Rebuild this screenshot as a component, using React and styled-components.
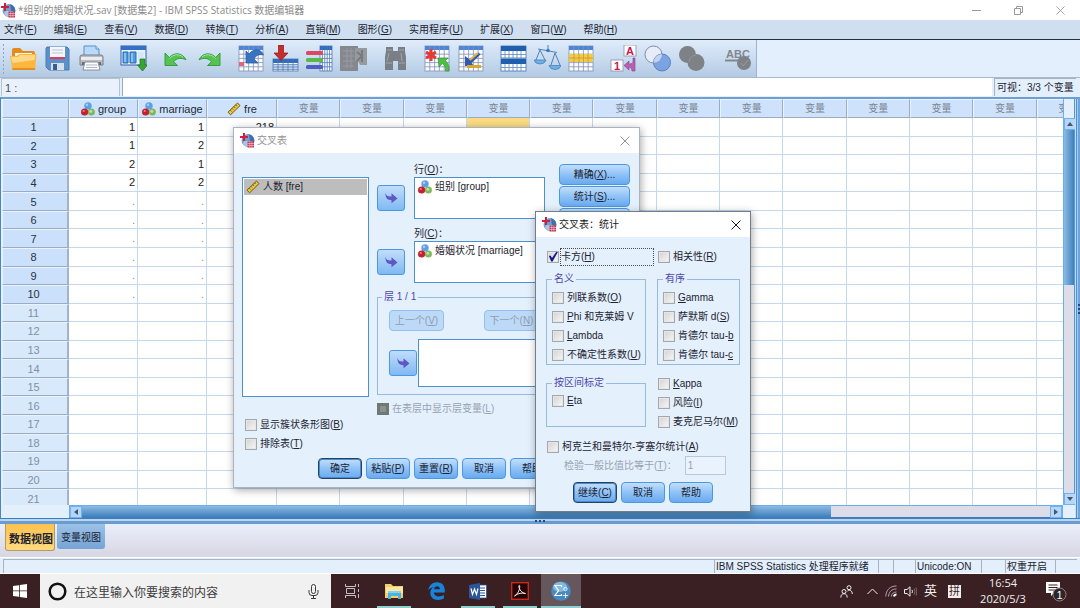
import React from 'react';
import styled, { createGlobalStyle, css } from 'styled-components';

const GlobalStyle = createGlobalStyle`
    * {
        box-sizing: border-box;
    }
    body {
        margin: 0;
        overflow: hidden;
        font-family: "Liberation Sans", "Noto Sans CJK SC", sans-serif;
        font-size: 10px;
        line-height: 12px;
        color: #1c2430;
    }
    button,
    input {
        font: inherit;
        color: inherit;
        margin: 0;
        padding: 0;
    }
    button {
        border: 0;
        background: none;
        white-space: nowrap;
    }
    svg {
        display: block;
        flex: none;
    }
`;

/* ---------- window ---------- */

const Desktop = styled.div`
    position: relative;
    display: flex;
    flex-direction: column;
    height: 100vh;
    background: #e4effc;
`;

const TitleBar = styled.header`
    display: flex;
    align-items: center;
    height: 20px;
    padding: 0 12px 0 1px;
    gap: 2px;
    background: #fff;
    color: #8b8b8b;
    font-family: "Open Sans", "Noto Sans CJK SC", sans-serif;
    white-space: nowrap;
`;

const WindowTitle = styled.h1`
    flex: 1;
    margin: 0;
    font-size: 10px;
    font-weight: 400;
`;

const WindowButton = styled.button`
    display: flex;
    align-items: center;
    justify-content: center;
    width: 40px;
    height: 20px;
    color: #9a9a9a;
    &:last-child {
        margin-right: -12px;
    }
`;

const MenuBar = styled.nav`
    display: flex;
    align-items: center;
    gap: 17px;
    height: 20px;
    padding: 0 4px;
    background: #cfdff0;
    border-bottom: 1px solid #27313c;
`;

const ToolbarRow = styled.div`
    display: flex;
    height: 38px;
    border-bottom: 1px solid #a9b9cd;
    background: #e4effe;
`;

const Toolbar = styled.div`
    display: flex;
    align-items: center;
    gap: 8px;
    padding: 0 1px 0 2px;
    background: linear-gradient(#e0ecfa, #c9dcf0 50%, #b3cae3);
    border-right: 1px solid #9fb3ca;
`;

const Grip = styled.span`
    width: 3px;
    height: 32px;
    margin-right: -7px;
    background: radial-gradient(circle, #8ea4bf 1px, transparent 1px) 0 0 / 3px 4px;
`;

const ToolGroup = styled.div`
    display: flex;
    &:last-child {
        padding-left: 5px;
    }
`;

const ToolButton = styled.button`
    display: flex;
    justify-content: center;
    width: 34px;
`;

const CellBar = styled.div`
    display: flex;
    gap: 2px;
    height: 19px;
    padding: 0 4px 1px 1px;
`;

const CellName = styled.div`
    width: 119px;
    padding: 3px 4px 0 3px;
    font-size: 11px;
    color: #4a5260;
    background: #e8f1fc;
    border: 1px solid #b4c2d4;
    border-bottom: 0;
`;

const CellEditor = styled.input`
    flex: 1;
    min-width: 0;
    background: #fff;
    border: 0;
    border-left: 1px solid #9aa9bb;
    border-radius: 0;
    outline: 0;
`;

const VisibleCount = styled.div`
    padding: 3px 0 0 2px;
    width: 82px;
    border-top: 1px solid #a6b3c4;
    border-left: 1px solid #a6b3c4;
    white-space: nowrap;
`;

/* ---------- data grid ---------- */

const Workspace = styled.main`
    flex: 1;
    min-height: 0;
    display: grid;
    grid-template-columns: 1fr 12px 5px;
    grid-template-rows: 1fr 13px;
    padding-left: 1px;
    border-top: 2px solid #6d9fd2;
    border-left: 1px solid #4c86c0;
    background: #e4effc;
`;

const GridView = styled.div`
    overflow: hidden;
    background: #fff;
`;

const DataTable = styled.table`
    table-layout: fixed;
    width: calc(100% + 37px);
    height: calc(100% + 3px);
    border-collapse: separate;
    border-spacing: 0;
    font-size: 11px;
`;

const headCell = css`
    padding: 0;
    font-weight: 400;
    text-align: center;
    border: 1px solid #9cabc4;
    border-top-color: #eaf3ff;
    border-left-color: #eaf3ff;
    background: #cfe2fb;
`;

const ColumnHead = styled.th`
    ${headCell}
    height: 19px;
    width: ${(props) => props.$width || 'auto'};
    color: ${(props) => (props.$empty ? '#7b8594' : '#222a36')};
    font-size: ${(props) => (props.$empty ? '10px' : '11px')};
`;

const HeadInner = styled.span`
    display: flex;
    align-items: center;
    justify-content: center;
    gap: 3px;
`;

const RowHead = styled.th`
    ${headCell}
    border-right: 2px solid #9fb3cf;
    padding-right: 3px;
    color: ${(props) => (props.$used ? '#2a3240' : '#8290a4')};
    background: ${(props) => (props.$used ? '#cbe0fb' : '#d9e9fc')};
`;

const Cell = styled.td`
    padding: 0 2px 0 0;
    text-align: right;
    border-right: 1px solid #c4d9ee;
    border-bottom: 1px solid #c4d9ee;
    background: ${(props) => (props.$active ? '#fbdc83' : '#fff')};
    color: ${(props) => (props.$missing ? '#8590a0' : '#222')};
`;

const VerticalScroll = styled.div`
    display: flex;
    flex-direction: column;
    padding-top: 19px;
    background: #e4effc;
    border-right: 1px solid #4f97dc;
    border-left: 1px solid #6aaef0;
`;

const HorizontalScroll = styled.div`
    display: flex;
    margin-left: 67px;
    border: 1px solid #6aaef0;
    border-bottom-color: #3f7db8;
`;

const ScrollButton = styled.button`
    display: flex;
    flex: none;
    align-items: center;
    justify-content: center;
    width: 12px;
    height: 12px;
    color: #44566e;
    background: #b5d6f8;
    border: 1px solid #6fb2f2;
`;

const Thumb = styled.div`
    flex: ${(props) => props.$size};
    background: linear-gradient(
        ${(props) => (props.$vertical ? '90deg' : '180deg')},
        #8cbbe4,
        #3f80bd
    );
`;

const Track = styled.div`
    flex: ${(props) => props.$size};
    background: #dcdde8;
`;

const Splitter = styled.div`
    display: flex;
    align-items: center;
    justify-content: center;
    gap: 2px;
    height: 6px;
    background: linear-gradient(#3e80bd 1px, #b7d6f5 1px 3px, #6c9cce 3px);
`;

const SideSplitter = styled(Splitter)`
    grid-column: 3;
    grid-row: 1 / 3;
    flex-direction: column;
    height: auto;
    padding-left: 2px;
    background: linear-gradient(90deg, #c7dff7 1px, #4f90d0 1px 2px, #a5cbef 2px 3px, #6fa5db 3px);
`;

const Dot = styled.i`
    width: 2px;
    height: 2px;
    background: #274b78;
`;

const TabStrip = styled.div`
    display: flex;
    align-items: flex-start;
    gap: 2px;
    height: 33px;
    padding: 0 5px;
    background: linear-gradient(#e9effa, #d7d6e3);
`;

const ViewTab = styled.button`
    padding: 0 3px;
    border-radius: 0 0 3px 3px;
    ${(props) =>
        props.$active
            ? css`
                  height: 27px;
                  width: 50px;
                  font-size: 11px;
                  font-weight: 700;
                  padding-top: 3px;
                  background: linear-gradient(#fbc24f, #fedb7e);
                  border: 1px solid #b79a63;
                  border-top: 0;
              `
            : css`
                  height: 25px;
                  width: 48px;
                  padding-top: 2px;
                  background: linear-gradient(#9cc1e6, #74a4d6);
              `}
`;

const StatusBar = styled.footer`
    display: flex;
    height: 17px;
    padding: 1px 3px 0 3px;
    background: #e3effb;
    border-top: 1px solid #fff;
    border-bottom: 1px solid #fff;
`;

const StatusField = styled.div`
    flex: ${(props) => (props.$width ? 'none' : 1)};
    width: ${(props) => props.$width || 'auto'};
    padding: 1px 0 0 1px;
    border-top: 1px solid #a8b3c2;
    border-left: 1px solid #a8b3c2;
    white-space: nowrap;
`;

/* ---------- dialogs ---------- */

const DialogWindow = styled.section`
    position: absolute;
    left: ${(props) => props.$left};
    top: ${(props) => props.$top};
    width: ${(props) => props.$width};
    background: #e5f0fd;
    border: 1px solid ${(props) => (props.$front ? '#6f7d8d' : '#aab4c0')};
    box-shadow: 1px 2px 8px rgba(0, 0, 0, 0.35);
`;

const DialogTitle = styled.header`
    display: flex;
    align-items: center;
    gap: 2px;
    height: 25px;
    padding: 0 9px 0 6px;
    background: #fff;
    color: ${(props) => (props.$front ? '#1a1a1a' : '#949494')};
    h2 {
        flex: 1;
        margin: 0;
        font-size: 10px;
        font-weight: 400;
    }
`;

const CrosstabBody = styled.div`
    display: flex;
    flex-direction: column;
    gap: 5px;
    padding: 11px 9px 8px 8px;
`;

const Columns = styled.div`
    display: flex;
`;

const SourceColumn = styled.div`
    width: 127px;
    margin-right: 8px;
    padding-top: 13px;
`;

const VariableList = styled.div`
    height: ${(props) => props.$height};
    flex: 1;
    min-width: 0;
    padding: 1px;
    background: #fff;
    border: 1px solid #4d8fd0;
`;

const Variable = styled.div`
    display: flex;
    align-items: center;
    gap: 3px;
    height: 16px;
    padding-left: 2px;
    white-space: nowrap;
    background: ${(props) => (props.$selected ? '#bdbdbd' : 'none')};
`;

const SourceChecks = styled.div`
    padding: 18px 0 0 3px;
`;

const TargetColumn = styled.div`
    flex: 1;
    min-width: 0;
`;

const TargetLabel = styled.div`
    height: 13px;
    padding-left: 37px;
`;

const TargetRow = styled.div`
    display: flex;
    align-items: center;
    gap: ${(props) => props.$gap || '9px'};
    margin-bottom: ${(props) => props.$after || '0'};
`;

const ArrowButton = styled.button`
    display: flex;
    flex: none;
    align-items: center;
    justify-content: center;
    width: 28px;
    height: 26px;
    border: 1px solid #4a98e2;
    border-radius: 3px;
    background: linear-gradient(#c0ddfb, #7fb9f3);
`;

const PushButton = styled.button`
    width: ${(props) => props.$width || '44px'};
    height: 21px;
    border: 1px solid ${(props) => (props.$primary ? '#27415f' : '#4a98e2')};
    border-radius: 4px;
    background: linear-gradient(#c2defb, #8fc2f7 50%, #69aaf0);
    ${(props) => props.$primary && 'box-shadow: inset 0 0 0 1px #4a8cd0;'}
    &:disabled {
        color: #8f9daf;
        border-color: #8fc0ee;
        background: #bcdaf8;
    }
`;

const ButtonRow = styled.div`
    display: flex;
    justify-content: ${(props) => (props.$spread ? 'space-between' : 'center')};
    gap: 4px;
    padding: ${(props) => props.$padding || '0'};
`;

const SideButtons = styled.div`
    display: flex;
    flex-direction: column;
    gap: 1px;
    margin-left: 14px;
`;

const Group = styled.fieldset`
    margin: ${(props) => props.$margin || '0'};
    min-width: 0;
    padding: ${(props) => props.$padding || '3px 0 0 5px'};
    border: 1px solid #96b9df;
    height: ${(props) => props.$height || 'auto'};
    legend {
        margin-left: ${(props) => props.$indent || '0'};
        padding: 0 2px;
        color: #4b48a8;
    }
`;

const CheckLabel = styled.label`
    display: flex;
    align-items: center;
    gap: 3px;
    height: 19px;
    white-space: nowrap;
    color: ${(props) => (props.$disabled ? '#97a3b2' : 'inherit')};
    input {
        position: relative;
        flex: none;
        appearance: none;
        width: 12px;
        height: 12px;
        border: 1px solid #a4a8ad;
        background: linear-gradient(135deg, #d2d2d2, #f8f8f8);
        box-shadow: inset 0 0 0 1px #e6e6e6;
    }
    input:disabled {
        background: #8a918e;
        border-color: #6f7875;
        box-shadow: inset 0 0 0 2px #6f7875;
    }
    input:checked::after {
        content: '';
        position: absolute;
        inset: 0;
        background: #16168a;
        clip-path: polygon(8% 42%, 28% 42%, 40% 64%, 84% 2%, 100% 2%, 46% 100%, 32% 100%);
    }
`;

const Focusable = styled.span`
    ${(props) =>
        props.$focused &&
        css`
            flex: 1;
            margin-left: -2px;
            padding: 2px 0;
            height: 18px;
            border: 1px dotted #4a4a4a;
        `}
`;

const StatsBody = styled.div`
    padding: 10px 10px 8px;
`;

const StatsGrid = styled.div`
    display: grid;
    grid-template-columns: 100px 1fr;
    column-gap: 11px;
    padding: ${(props) => props.$padding || '0'};
`;

const WideCheck = styled.div`
    width: 108px;
    padding-left: 1px;
`;

const Inset = styled.div`
    padding: ${(props) => props.$padding || '0 0 0 1px'};
`;

const RatioRow = styled.label`
    display: flex;
    align-items: center;
    gap: 8px;
    height: 19px;
    margin-bottom: 7px;
    padding-left: 18px;
    color: #97a3b2;
    white-space: nowrap;
    input {
        width: 41px;
        height: 19px;
        padding-left: 2px;
        background: #e9f2fd;
        border: 1px solid #b9c9db;
        border-radius: 0;
    }
`;

/* ---------- taskbar ---------- */

const Taskbar = styled.div`
    display: flex;
    height: 34px;
    background: #3a2023;
    color: #f2eeee;
`;

const TaskButton = styled.button`
    display: flex;
    align-items: center;
    justify-content: center;
    width: ${(props) => props.$width || '42px'};
    background: ${(props) => (props.$active ? '#65575b' : 'none')};
`;

const RunMark = styled.span`
    display: flex;
    align-items: center;
    justify-content: center;
    align-self: stretch;
    width: ${(props) => (props.$full ? '100%' : '34px')};
    border-top: 2px solid transparent;
    border-bottom: 2px solid ${(props) => (props.$on ? '#8fd0cf' : 'transparent')};
`;

const SearchBox = styled.label`
    display: flex;
    align-items: center;
    gap: 7px;
    width: 291px;
    padding: 0 12px 0 8px;
    background: #f1f1f1;
    color: #333;
    input {
        flex: 1;
        min-width: 0;
        border: 0;
        outline: 0;
        background: none;
        font-size: 12px;
        font-family: "Noto Sans CJK SC", sans-serif;
    }
    input::placeholder {
        color: #3c3c3c;
        opacity: 1;
    }
`;

const Tray = styled.div`
    display: flex;
    align-items: center;
    gap: 7px;
    margin-left: auto;
    padding-right: 13px;
    font-size: 13px;
`;

const Clock = styled.time`
    width: 56px;
    margin: 0 8px 0 0;
    font: 11px/16px "Open Sans", sans-serif;
    text-align: center;
`;

const ImeMode = styled.span`
    width: 13px;
    height: 13px;
    margin-left: 4px;
    background: #f2eeee;
    color: #3a2023;
    font-size: 11px;
    line-height: 13px;
    text-align: center;
`;

/* ---------- icons ---------- */

const SpssIcon = () => (
    <svg width="15" height="15" viewBox="0 0 15 15">
        <circle cx="8" cy="7.5" r="6.4" fill="#6f9ed0" />
        <path d="M3 11a6.4 6.4 0 0 0 8 2.2V8H4z" fill="#a9c6e6" />
        <path d="M9 1.3a6.4 6.4 0 0 1 5 8L10 8z" fill="#3f6fae" />
        <path d="M4 0v8M0 4h8" stroke="#d01f3c" strokeWidth="2" />
        <rect x="7.5" y="8.5" width="6.5" height="6" fill="#c93450" />
        <path d="M7.5 10.5H14M7.5 12.5H14M9.7 8.5v6M11.9 8.5v6" stroke="#f0c9d2" strokeWidth=".6" />
    </svg>
);

const NominalIcon = () => (
    <svg width="14" height="14" viewBox="0 0 14 14">
        <circle cx="7" cy="3.9" r="3.7" fill="#5f9fe6" />
        <circle cx="6" cy="2.8" r="1.2" fill="#a9cdf5" />
        <circle cx="3.6" cy="10" r="3.6" fill="#c4202f" />
        <circle cx="2.7" cy="9" r="1.1" fill="#e9848c" />
        <circle cx="10.4" cy="10" r="3.5" fill="#7fb75c" />
        <circle cx="9.8" cy="9.3" r="1.5" fill="#bfe0a4" />
    </svg>
);

const ScaleIcon = () => (
    <svg width="14" height="14" viewBox="0 0 14 14">
        <path d="M10.5 1 13 3.6 3.6 12.8 1 10.2z" fill="#ecc93c" stroke="#6d5612" strokeWidth="1" />
        <path d="m8.6 2.9 1.2 1.2M6.8 4.6l1.4 1.4M5 6.4l1.2 1.2M3.2 8.1l1.4 1.4" stroke="#5b4a15" strokeWidth=".8" />
    </svg>
);

const TransferIcon = () => (
    <svg width="13" height="12" viewBox="0 0 13 12">
        <path d="M.5.8C1 4 3 4.600 6.500 4.400V1.300L12.500 6.400 6.500 11.300V8.200C2.500 8.200.2 6 .5.8z" fill="#6255c4" />
    </svg>
);

const CloseIcon = ({ size = 10 }) => (
    <svg width={size} height={size} viewBox="0 0 10 10" fill="none" stroke="currentColor" strokeWidth="1">
        <path d="m.5.5 9 9M9.500.5l-9 9" />
    </svg>
);

const MinimizeIcon = () => (
    <svg width="9" height="9" viewBox="0 0 9 9" stroke="currentColor">
        <path d="M0 4.500h9" />
    </svg>
);

const RestoreIcon = () => (
    <svg width="9" height="9" viewBox="0 0 9 9" fill="none" stroke="currentColor">
        <path d="M.5 2.500h6v6h-6zM2.500 2.500v-2h6v6h-2" />
    </svg>
);

const Art = ({ children }) => (
    <svg width="27" height="27" viewBox="0 0 27 27">
        {children}
    </svg>
);

// small spreadsheet that several tools draw on top of
const Sheet = ({ x = 1, y = 1, w = 24, h = 25, head = '#4d86d8', line = '#8391b5' }) => (
    <g>
        <rect x={x} y={y} width={w} height={h} fill="#fbfcff" stroke={line} strokeWidth=".8" />
        <rect x={x} y={y} width={w} height="4" fill={head} />
        {[1, 2, 3, 4].map((i) => (
            <path
                key={i}
                d={`M${x + (w * i) / 5} ${y}v${h}M${x} ${y + 4 + ((h - 4) * i) / 5}h${w}`}
                stroke={line}
                strokeWidth=".8"
            />
        ))}
    </g>
);

const FolderIcon = () => (
    <Art>
        <path d="M2 5q0-2 2-2h6l3 3h10q2 0 2 2v6H2z" fill="#e58b1d" />
        <path d="M5 8h17v5H5z" fill="#fff5da" />
        <path d="M0 11h7l2-2h17.500l-1.500 16H2.500z" fill="#fbb740" />
        <path d="M1 12h7l2-2h15l-.5 5-22 3z" fill="#ffd987" />
        <path d="M2.300 23h23l-.3 2H2.500z" fill="#e98d1c" />
    </Art>
);

const SaveIcon = () => (
    <Art>
        <path d="M3 2h20l2 2v21H5l-3-3V3z" fill="#5b90c8" stroke="#4a7cb4" />
        <rect x="6" y="2" width="15" height="12" fill="#f4f6fa" />
        <path d="M6 12h15v2H6z" fill="#dc3d5a" />
        <path d="M8 5h11M8 8h11" stroke="#bcc6d6" />
        <path d="M7 18h13v7H7z" fill="#d7dfea" />
        <rect x="9" y="19" width="4" height="6" fill="#355f92" />
    </Art>
);

const PrintIcon = () => (
    <Art>
        <path d="M6 1h12l3 3v8H6z" fill="#b9d9f8" stroke="#5a8fc8" />
        <path d="M18 1v3h3" fill="#e9f4ff" stroke="#5a8fc8" />
        <path d="M2 12q0-2 2-2h19q2 0 2 2v8H2z" fill="#b9bcc4" stroke="#7b7f88" />
        <path d="M3 12h21v3H3z" fill="#ececf0" />
        <path d="M4 17h19v3H4z" fill="#6a6e77" />
        <path d="M7 17h13l2 8H5z" fill="#fff" stroke="#85909e" />
        <path d="M8 20h11M8 22.500h11" stroke="#aab4c2" />
    </Art>
);

const RecallIcon = () => (
    <Art>
        <rect x="1" y="1" width="25" height="19" fill="#e9f3fe" stroke="#315fa8" />
        <rect x="1" y="1" width="25" height="4" fill="#3471c5" />
        <path d="M3 7h5v11H3zM10 7h6v11h-6z" fill="#4d9be2" stroke="#2a69b0" />
        <path d="M5 8v9M12 8v9" stroke="#c9e4fb" />
        <path d="M18 7h6v9h-6z" fill="#d5e7f9" />
        <path d="M20 14h5v6h2.500L22.500 26 17.500 20H20z" fill="#35a535" stroke="#217421" strokeWidth=".7" />
    </Art>
);

const UndoIcon = ({ flip }) => (
    <Art>
        <g transform={flip ? 'translate(27 0) scale(-1 1)' : undefined}>
            <path
                d="M3 8v12.500h12.500l-4-3.700c3-4 8-4.200 12.500-2C20.500 7.500 12 7 7.300 12.500z"
                fill="#55c353"
                stroke="#2f9737"
                strokeWidth=".9"
            />
            <path d="M7.500 13.500c4-4.500 9.500-4.800 13.500-1.500" stroke="#a9e5a0" fill="none" />
        </g>
    </Art>
);

const GoCaseIcon = () => (
    <Art>
        <Sheet />
        <rect x="1" y="17" width="5" height="4" fill="#e5637b" />
        <path d="M8 6v12h12l-4-4c2-4 5-5 9.500-4C23 3 15 3.500 11 9z" fill="#3974c2" stroke="#275799" strokeWidth=".7" />
    </Art>
);

const GoVariableIcon = () => (
    <Art>
        <Sheet y={14} h={12} w={25} head="#2f6dc0" line="#4d78b4" />
        <path d="M6.500 0h5v8H16L9 15.500 2 8h4.500z" fill="#c92a2a" stroke="#8e1919" strokeWidth=".7" />
    </Art>
);

const VariablesIcon = () => (
    <Art>
        <Sheet x={14} w={12} head="#2f6dc0" line="#4d78b4" />
        <rect x="0" y="6" width="17" height="4" rx="1.500" fill="#dd4766" />
        <rect x="0" y="13" width="17" height="4" rx="1.500" fill="#5fb648" />
        <rect x="0" y="20" width="17" height="4" rx="1.500" fill="#4d5fc4" />
    </Art>
);

const StatsIcon = () => (
    <Art>
        <path d="M0 1h18v25H0z" fill="#85898e" />
        <path d="M3 6h11M3 11h11M3 16h11M3 21h11M7 3v20M11 3v20" stroke="#979ba0" />
        <path d="M15 3h12v17h-7l-2-4h-3z" fill="#969a9f" />
        <path d="M22 5v12M22 11l-5-4M22 11l-5 5" stroke="#777b80" strokeWidth="2" />
    </Art>
);

const FindIcon = () => (
    <Art>
        <path d="M4 2h7v4h5V2h7v4l1 6v13h-8v-9h-5v9H3V12l1-6z" fill="#7a7f86" />
        <path d="M5 5h5M17 5h5M4 18h6M17 18h6M7 8l-2 8M19 8l1 8" stroke="#a1a6ac" />
    </Art>
);

const InsertCaseIcon = () => (
    <Art>
        <Sheet />
        <path d="M7 4v12M2 7l10 6M12 7 2 13" stroke="#e33a35" strokeWidth="3" />
        <path d="M14 13h10l-2.500 2.500c3 3 4 6 3.500 10.500h-3.500c.3-4-1-6-3-7.500L15 22z" fill="#4fbe45" stroke="#2c8f2c" strokeWidth=".6" />
    </Art>
);

const InsertVariableIcon = () => (
    <Art>
        <Sheet />
        <path d="M7 11v10h9l-2.500-3 9-8.500-2-2-9 7z" fill="#2f58b0" />
        <path d="m12 15 8-7" stroke="#e0b13a" strokeWidth="2" />
        <path d="M9 20h14v3H9z" fill="#d8a72c" />
    </Art>
);

const SplitSheet = ({ y }) => (
    <g>
        <rect x="1" y={y} width="25" height="12" fill="#fff" stroke="#3f73b5" strokeWidth=".8" />
        <rect x="1" y={y} width="25" height="5" fill="#1f5fae" />
        <path
            d={`M1 ${y + 8.5}h25M5 ${y + 5}v7M9 ${y + 5}v7M13 ${y + 5}v7M17 ${y + 5}v7M21 ${y + 5}v7`}
            stroke="#5c89c2"
            strokeWidth=".8"
        />
    </g>
);

const SplitIcon = () => (
    <Art>
        <SplitSheet y={1} />
        <SplitSheet y={14} />
    </Art>
);

const WeightIcon = () => (
    <Art>
        <path d="M14 0v4M4 4l19 3.500M6 5 2 15M6 5l5 10M21 8l-4 12M21 8l5 12" stroke="#4d83ba" fill="none" />
        <path d="M0 15h12q-1 4-6 4t-6-4z" fill="#6fb0e8" stroke="#3e78b4" strokeWidth=".7" />
        <path d="M15 20.500h12q-1 4-6 4t-6-4z" fill="#6fb0e8" stroke="#3e78b4" strokeWidth=".7" />
        <circle cx="14" cy="5.500" r="1.800" fill="#3e78b4" />
    </Art>
);

const SelectCasesIcon = () => (
    <Art>
        <Sheet />
        <path d="M1 9h24v8H1z" fill="#f2cb4b" />
        <path d="M1 13h24M6 9v8M11 9v8M15.500 9v8M20 9v8" stroke="#c69b28" strokeWidth=".8" />
    </Art>
);

const ValueLabelsIcon = () => (
    <Art>
        <rect x="14" y="0" width="12" height="11" fill="#fff" stroke="#8c8fa5" strokeWidth=".8" />
        <rect x="1" y="15" width="12" height="11" fill="#fff" stroke="#8c8fa5" strokeWidth=".8" />
        <text x="20" y="9.500" fontSize="11" fontWeight="700" fill="#c9184c" textAnchor="middle">A</text>
        <text x="7" y="24.500" fontSize="11" fontWeight="700" fill="#c9184c" textAnchor="middle">1</text>
        <path d="M23 13v4q0 2-4 2v-3l-5 4.500 5 4.500v-3q3 0 3 4h3V13z" fill="#b85fae" stroke="#87408a" strokeWidth=".6" />
    </Art>
);

const SetsIcon = () => (
    <Art>
        <circle cx="9.500" cy="9.500" r="8.500" fill="#e7edf6" stroke="#7d8da8" />
        <circle cx="18" cy="17.500" r="8.500" fill="#6f9ae0" fillOpacity=".85" stroke="#5b7fc0" />
        <path d="M9.600 18a8.500 8.500 0 0 0 8.400-9 8.500 8.500 0 0 0-8.400 9z" fill="#c2d3f2" />
    </Art>
);

const AllVariablesIcon = () => (
    <Art>
        <circle cx="9.500" cy="9.500" r="8.500" fill="#7e8186" />
        <circle cx="18" cy="17.500" r="8.500" fill="#7e8186" />
        <path d="M11 17a8 8 0 0 1 7-7" stroke="#95989c" fill="none" />
    </Art>
);

const SpellIcon = () => (
    <Art>
        <text x="1" y="13" fontSize="11" fontWeight="700" fill="#83878d">ABC</text>
        <path d="M0 15.500h20" stroke="#83878d" strokeWidth="2" />
        <circle cx="19" cy="18" r="7" fill="#7e8186" />
        <path d="m15.500 18 2.500 3 5-6" stroke="#989ca1" fill="none" />
    </Art>
);

const WindowsLogo = () => (
    <svg width="14" height="14" viewBox="0 0 14 14" fill="#fff">
        <path d="M0 2 6 1.200v5.400H0zM6.800 1.100 14 0v6.600H6.800zM0 7.300h6v5.500L0 12zM6.800 7.300H14V14l-7.200-1z" />
    </svg>
);

const CortanaIcon = () => (
    <svg width="19" height="19" viewBox="0 0 19 19">
        <circle cx="9.500" cy="9.500" r="7.800" fill="none" stroke="#111" strokeWidth="2.500" />
    </svg>
);

const MicIcon = () => (
    <svg width="11" height="15" viewBox="0 0 11 15" fill="none" stroke="#3a3a3a">
        <rect x="3.500" y=".5" width="4" height="9" rx="2" />
        <path d="M1 6v2.500q0 3 3 3h3q3 0 3-3V6M5.500 11.500V14M3 14.500h5" />
    </svg>
);

const TaskViewIcon = () => (
    <svg width="15" height="14" viewBox="0 0 15 14" fill="none" stroke="#c9c0c1">
        <path d="M1.500 4.500h8v5h-8zM.5 0v2.500h10V0M.5 14v-2.500h10V14M13.500 0v3M13.500 5v3M13.500 10v4" />
    </svg>
);

const ExplorerIcon = () => (
    <svg width="19" height="16" viewBox="0 0 19 16">
        <path d="M0 1h6l2 2h10v12H0z" fill="#f3cf6b" />
        <path d="M1 4h17v6H1z" fill="#fbe7a2" />
        <path d="M3 8h13v8h-3v-3H6v3H3z" fill="#4cb3df" />
        <path d="M3 8h13v2H3z" fill="#84d0ee" />
    </svg>
);

const EdgeIcon = () => (
    <svg width="17" height="18" viewBox="0 0 17 18">
        <path
            d="M.3 8.300C1 3.300 4.500.2 9 .2c5 0 7.800 3.600 7.800 8v2.200H5.800c.2 2.700 2.500 4 5.200 4 1.900 0 3.500-.5 4.900-1.300v3.500c-1.600.9-3.500 1.300-5.600 1.300-4.900 0-8-2.800-8-7 0-2.700 1.300-4.700 3.500-6C3.500 5.400 1.500 6.300.3 8.300zM6 7.300h5.900c0-1.900-1-3.100-2.800-3.100-1.700 0-2.800 1.200-3.100 3.100z"
            fill="#1684dc"
        />
    </svg>
);

const WordIcon = () => (
    <svg width="18" height="17" viewBox="0 0 18 17">
        <path d="M9 2h8.500v13H9z" fill="#fff" stroke="#2b579a" strokeWidth=".8" />
        <path d="M11 5h5M11 7.500h5M11 10h5M11 12.500h5" stroke="#2b579a" />
        <path d="M0 2 11 0v17L0 15z" fill="#2b579a" />
        <path d="m2 5.500 1.500 6 2-5.500 2 5.500L9 5.500" stroke="#fff" strokeWidth="1.200" fill="none" />
    </svg>
);

const AcrobatIcon = () => (
    <svg width="18" height="18" viewBox="0 0 18 18">
        <rect x=".7" y=".7" width="16.600" height="16.600" fill="#260507" stroke="#c8281e" strokeWidth="1.400" />
        <path
            d="M3.500 14c3-1.500 5.500-6 5.300-10-.1-.9-1.100-.8-1 .2.300 3.500 3.200 7 6.700 7.300-3.500-1-7.500-.3-11 2.500z"
            fill="none"
            stroke="#f0e6e6"
            strokeWidth="1"
        />
    </svg>
);

const SpssTaskIcon = () => (
    <svg width="20" height="20" viewBox="0 0 20 20">
        <circle cx="10" cy="10" r="9.800" fill="#4789c0" />
        <ellipse cx="9" cy="6" rx="7" ry="5" fill="#86b9de" />
        <path d="M10.500 6V4.500H4L7.500 9.500 4 14.500h6.500V13" fill="none" stroke="#fff" strokeWidth="1.200" />
        <circle cx="14.500" cy="8" r="1.700" fill="none" stroke="#fff" strokeWidth=".8" />
        <path d="M14.500 12v5M12 14.500h5" stroke="#fff" strokeWidth=".8" />
    </svg>
);

const PeopleIcon = () => (
    <svg width="13" height="13" viewBox="0 0 13 13" fill="none" stroke="currentColor">
        <circle cx="9" cy="2.700" r="2" />
        <circle cx="4" cy="6.500" r="2" />
        <path d="M.8 12.500c0-2.500 1.400-3.800 3.200-3.800s3.200 1.300 3.200 3.800M7.500 6c2.600-1.800 4.800 0 4.800 3" />
    </svg>
);

const ChevronIcon = () => (
    <svg width="11" height="7" viewBox="0 0 11 7" fill="none" stroke="currentColor">
        <path d="m.5 6 5-5 5 5" />
    </svg>
);

const WifiIcon = () => (
    <svg width="12" height="12" viewBox="0 0 12 12" fill="none" stroke="#b3a5a7">
        <path d="M.8 11.500C1 5 5 1 11.500 1M3.500 11.500C3.800 7 6.500 4 11.500 4M6.300 11.500c.2-2.500 2-4.500 5.200-4.500" />
        <path d="M9 11.500a2.500 2.500 0 0 1 2.500-2" stroke="#fff" strokeWidth="2" />
    </svg>
);

const SoundIcon = () => (
    <svg width="13" height="11" viewBox="0 0 13 11" fill="none" stroke="currentColor">
        <path d="M.5 3.500H3L6 .8v9.400L3 7.500H.5z" />
        <path d="M8 4q1 1.500 0 3" />
        <path d="M10 2.500q2 3 0 6M12 1.500q1.500 4 0 8" stroke="#7c686b" />
    </svg>
);

const NotificationIcon = () => (
    <svg width="21" height="21" viewBox="0 0 21 21">
        <path d="M0 1h14v11H8l-3 3v-3H0z" fill="#fff" />
        <path d="M2.500 4h9M2.500 6.500h9M2.500 9h9" stroke="#3a2023" />
        <circle cx="13.500" cy="13.500" r="6.500" fill="#2d2527" stroke="#8d7f81" />
        <text x="13.500" y="17.500" fontSize="11" fill="#fff" textAnchor="middle">1</text>
    </svg>
);

const Triangle = ({ angle = 0 }) => (
    <svg width="6" height="6" viewBox="0 0 6 6">
        <path d="M0 5 3 1l3 4z" fill="currentColor" transform={`rotate(${angle} 3 3)`} />
    </svg>
);

/* ---------- data ---------- */

const menus = [
    '文件(&F)', '编辑(&E)', '查看(&V)', '数据(&D)', '转换(&T)', '分析(&A)',
    '直销(&M)', '图形(&G)', '实用程序(&U)', '扩展(&X)', '窗口(&W)', '帮助(&H)',
];

const tools = [
    [['打开', FolderIcon], ['保存', SaveIcon], ['打印', PrintIcon]],
    [['重新调用对话框', RecallIcon]],
    [['撤销', UndoIcon], ['重做', () => <UndoIcon flip />]],
    [['转到个案', GoCaseIcon], ['转到变量', GoVariableIcon], ['变量', VariablesIcon], ['描述统计', StatsIcon]],
    [['查找', FindIcon]],
    [['插入个案', InsertCaseIcon], ['插入变量', InsertVariableIcon]],
    [['拆分文件', SplitIcon], ['个案加权', WeightIcon], ['选择个案', SelectCasesIcon]],
    [['值标签', ValueLabelsIcon], ['使用变量集', SetsIcon], ['显示所有变量', AllVariablesIcon]],
    [['拼写检查', SpellIcon]],
];

const values = [
    ['1', '1', '218'],
    ['1', '2', ''],
    ['2', '1', ''],
    ['2', '2', ''],
];

const emptyColumns = Array.from({ length: 13 }, (_, i) => i);
const rows = Array.from({ length: 21 }, (_, i) => i);

const cellValue = (row, col) => {
    if (values[row]) return values[row][col];
    return row < 10 ? '.' : '';
};

// "&" marks the letter that is the keyboard mnemonic
const Mnemonic = ({ text }) => {
    const at = text.indexOf('&');
    if (at < 0) return text;
    return (
        <>
            {text.slice(0, at)}
            <u>{text[at + 1]}</u>
            {text.slice(at + 2)}
        </>
    );
};

const Check = ({ text, checked, disabled, focused }) => (
    <CheckLabel $disabled={disabled}>
        <input type="checkbox" defaultChecked={checked} disabled={disabled} />
        <Focusable $focused={focused}>
            <Mnemonic text={text} />
        </Focusable>
    </CheckLabel>
);

const Push = ({ text, width, primary, disabled }) => (
    <PushButton type="button" $width={width} $primary={primary} disabled={disabled}>
        <Mnemonic text={text} />
    </PushButton>
);

const Transfer = () => (
    <ArrowButton type="button" aria-label="移动变量">
        <TransferIcon />
    </ArrowButton>
);

const DataGrid = () => (
    <GridView>
        <DataTable>
            <thead>
                <tr>
                    <ColumnHead $width="67px" />
                    <ColumnHead $width="69px">
                        <HeadInner><NominalIcon />group</HeadInner>
                    </ColumnHead>
                    <ColumnHead $width="69px">
                        <HeadInner><NominalIcon />marriage</HeadInner>
                    </ColumnHead>
                    <ColumnHead $width="70px">
                        <HeadInner><ScaleIcon />fre</HeadInner>
                    </ColumnHead>
                    {emptyColumns.map((i) => (
                        <ColumnHead key={i} $empty>变量</ColumnHead>
                    ))}
                </tr>
            </thead>
            <tbody>
                {rows.map((row) => (
                    <tr key={row}>
                        <RowHead $used={row < 10}>{row + 1}</RowHead>
                        {[0, 1, 2].map((col) => (
                            <Cell key={col} $missing={row > 3}>{cellValue(row, col)}</Cell>
                        ))}
                        {emptyColumns.map((i) => (
                            <Cell key={i} $active={row === 0 && i === 3} />
                        ))}
                    </tr>
                ))}
            </tbody>
        </DataTable>
    </GridView>
);

const CrosstabsDialog = () => (
    <DialogWindow $left="233px" $top="127px" $width="407px">
        <DialogTitle>
            <SpssIcon />
            <h2>交叉表</h2>
            <button type="button" aria-label="关闭"><CloseIcon /></button>
        </DialogTitle>
        <CrosstabBody>
            <Columns>
                <SourceColumn>
                    <VariableList $height="220px">
                        <Variable $selected><ScaleIcon />人数 [fre]</Variable>
                    </VariableList>
                    <SourceChecks>
                        <Check text="显示簇状条形图(&B)" />
                        <Check text="排除表(&T)" />
                    </SourceChecks>
                </SourceColumn>
                <TargetColumn>
                    <TargetLabel><Mnemonic text="行(&O)：" /></TargetLabel>
                    <TargetRow $after="9px">
                        <Transfer />
                        <VariableList $height="42px">
                            <Variable><NominalIcon />组别 [group]</Variable>
                        </VariableList>
                    </TargetRow>
                    <TargetLabel><Mnemonic text="列(&C)：" /></TargetLabel>
                    <TargetRow $after="8px">
                        <Transfer />
                        <VariableList $height="42px">
                            <Variable><NominalIcon />婚姻状况 [marriage]</Variable>
                        </VariableList>
                    </TargetRow>
                    <Group $padding="7px 5px 7px 11px" $indent="-7px">
                        <legend>层 1 / 1</legend>
                        <ButtonRow $spread $padding="0 0 8px">
                            <Push text="上一个(&V)" width="55px" disabled />
                            <Push text="下一个(&N)" width="55px" disabled />
                        </ButtonRow>
                        <TargetRow $gap="1px">
                            <Transfer />
                            <VariableList $height="48px" />
                        </TargetRow>
                    </Group>
                    <Inset $padding="4px 0 0"><Check text="在表层中显示层变量(&L)" disabled /></Inset>
                </TargetColumn>
                <SideButtons>
                    <Push text="精确(&X)..." width="71px" />
                    <Push text="统计(&S)..." width="71px" />
                    <PushButton type="button" $width="71px" aria-label="单元格" />
                </SideButtons>
            </Columns>
            <ButtonRow>
                <Push text="确定" primary />
                <Push text="粘贴(&P)" />
                <Push text="重置(&R)" />
                <Push text="取消" />
                <Push text="帮助" />
            </ButtonRow>
        </CrosstabBody>
    </DialogWindow>
);

const StatisticsDialog = () => (
    <DialogWindow $left="535px" $top="211px" $width="216px" $front>
        <DialogTitle $front>
            <SpssIcon />
            <h2>交叉表：统计</h2>
            <button type="button" aria-label="关闭"><CloseIcon /></button>
        </DialogTitle>
        <StatsBody>
            <StatsGrid $padding="0 0 7px">
                <WideCheck><Check text="卡方(&H)" checked focused /></WideCheck>
                <Inset><Check text="相关性(&R)" /></Inset>
            </StatsGrid>
            <StatsGrid $padding="0 0 9px">
                <Group>
                    <legend>名义</legend>
                    <Check text="列联系数(&O)" />
                    <Check text="&Phi 和克莱姆 V" />
                    <Check text="&Lambda" />
                    <Check text="不确定性系数(&U)" />
                </Group>
                <Group>
                    <legend>有序</legend>
                    <Check text="&Gamma" />
                    <Check text="萨默斯 d(&S)" />
                    <Check text="肯德尔 tau-&b" />
                    <Check text="肯德尔 tau-&c" />
                </Group>
            </StatsGrid>
            <StatsGrid $padding="0 0 6px">
                <Group $height="50px" $margin="3px 0 0" $padding="2px 0 0 5px">
                    <legend>按区间标定</legend>
                    <Check text="&Eta" />
                </Group>
                <Inset>
                    <Check text="&Kappa" />
                    <Check text="风险(&I)" />
                    <Check text="麦克尼马尔(&M)" />
                </Inset>
            </StatsGrid>
            <Inset><Check text="柯克兰和曼特尔-亨塞尔统计(&A)" /></Inset>
            <RatioRow>
                <span><Mnemonic text="检验一般比值比等于(&T)：" /></span>
                <input type="text" defaultValue="1" disabled />
            </RatioRow>
            <ButtonRow>
                <Push text="继续(&C)" primary />
                <Push text="取消" />
                <Push text="帮助" />
            </ButtonRow>
        </StatsBody>
    </DialogWindow>
);

const WindowsTaskbar = () => (
    <Taskbar>
        <TaskButton $width="40px" aria-label="开始"><WindowsLogo /></TaskButton>
        <SearchBox>
            <CortanaIcon />
            <input type="text" placeholder="在这里输入你要搜索的内容" aria-label="搜索" />
            <MicIcon />
        </SearchBox>
        <TaskButton aria-label="任务视图"><TaskViewIcon /></TaskButton>
        <TaskButton aria-label="文件资源管理器"><RunMark $on><ExplorerIcon /></RunMark></TaskButton>
        <TaskButton aria-label="Edge"><RunMark><EdgeIcon /></RunMark></TaskButton>
        <TaskButton aria-label="Word"><RunMark $on><WordIcon /></RunMark></TaskButton>
        <TaskButton aria-label="Acrobat"><RunMark $on><AcrobatIcon /></RunMark></TaskButton>
        <TaskButton $active $width="40px" aria-label="SPSS"><RunMark $on $full><SpssTaskIcon /></RunMark></TaskButton>
        <Tray>
            <PeopleIcon />
            <span />
            <ChevronIcon />
            <WifiIcon />
            <SoundIcon />
            <span>英</span>
            <ImeMode>拼</ImeMode>
            <span />
            <Clock>16:54<br />2020/5/3</Clock>
            <NotificationIcon />
        </Tray>
    </Taskbar>
);

const App = () => {
    return (
        <Desktop>
            <GlobalStyle />
            <TitleBar>
                <SpssIcon />
                <WindowTitle>*组别的婚姻状况.sav [数据集2] - IBM SPSS Statistics 数据编辑器</WindowTitle>
                <WindowButton aria-label="最小化"><MinimizeIcon /></WindowButton>
                <WindowButton aria-label="还原"><RestoreIcon /></WindowButton>
                <WindowButton aria-label="关闭"><CloseIcon size={9} /></WindowButton>
            </TitleBar>
            <MenuBar>
                {menus.map((menu) => (
                    <button type="button" key={menu}><Mnemonic text={menu} /></button>
                ))}
            </MenuBar>
            <ToolbarRow>
                <Toolbar>
                    <Grip />
                    {tools.map((group) => (
                        <ToolGroup key={group[0][0]}>
                            {group.map(([name, Icon]) => (
                                <ToolButton type="button" key={name} aria-label={name}>
                                    <Icon />
                                </ToolButton>
                            ))}
                        </ToolGroup>
                    ))}
                </Toolbar>
            </ToolbarRow>
            <CellBar>
                <CellName>1 :</CellName>
                <CellEditor type="text" aria-label="单元格值" />
                <VisibleCount>可视：3/3 个变量</VisibleCount>
            </CellBar>
            <Workspace>
                <DataGrid />
                <VerticalScroll>
                    <ScrollButton aria-label="向上"><Triangle /></ScrollButton>
                    <Thumb $vertical $size={155} />
                    <Track $size={208} />
                    <ScrollButton aria-label="向下"><Triangle angle={180} /></ScrollButton>
                </VerticalScroll>
                <SideSplitter><Dot /><Dot /><Dot /></SideSplitter>
                <HorizontalScroll>
                    <ScrollButton aria-label="向左"><Triangle angle={270} /></ScrollButton>
                    <Thumb $size={749} />
                    <Track $size={219} />
                    <ScrollButton aria-label="向右"><Triangle angle={90} /></ScrollButton>
                </HorizontalScroll>
            </Workspace>
            <Splitter><Dot /><Dot /><Dot /></Splitter>
            <TabStrip>
                <ViewTab type="button" $active>数据视图</ViewTab>
                <ViewTab type="button">变量视图</ViewTab>
            </TabStrip>
            <StatusBar>
                <StatusField />
                <StatusField $width="164px">IBM SPSS Statistics 处理程序就绪</StatusField>
                <StatusField $width="15px" />
                <StatusField $width="22px" />
                <StatusField $width="66px">Unicode:ON</StatusField>
                <StatusField $width="24px" />
                <StatusField $width="50px">权重开启</StatusField>
                <StatusField $width="22px" />
            </StatusBar>
            <WindowsTaskbar />
            <CrosstabsDialog />
            <StatisticsDialog />
        </Desktop>
    );
};

export default App;
